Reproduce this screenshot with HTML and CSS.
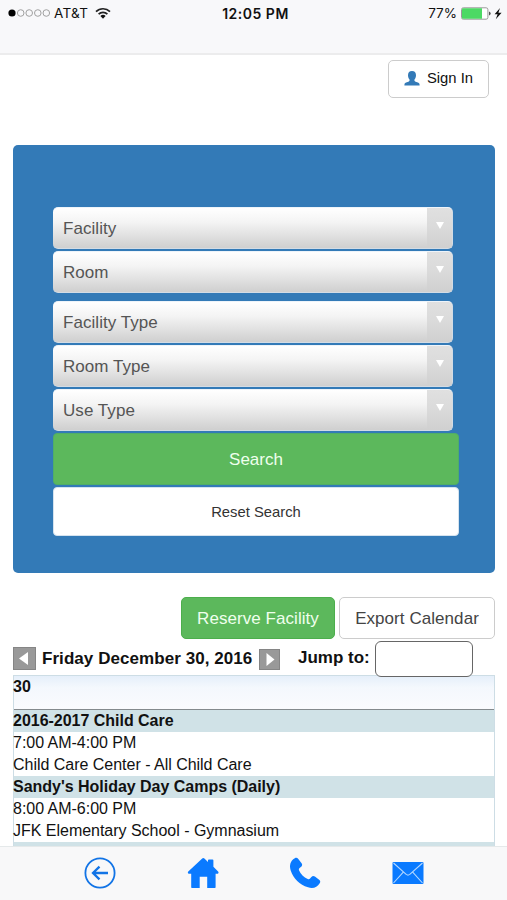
FILE: index.html
```
<!DOCTYPE html>
<html lang="en">
<head>
    <meta charset="UTF-8">
    <title>Facility Calendar</title>
    <link rel="stylesheet" href="styles.css">
</head>
<body>
<div class="app">
    <div class="statusbar">
        <div class="carrier">
            <svg class="signal" width="42" height="8" viewBox="0 0 42 8">
                <circle cx="4" cy="4" r="3.6" fill="#000"/>
                <g fill="none" stroke="#a0a0a0" stroke-width="1">
                    <circle cx="12.7" cy="4" r="3.3"/>
                    <circle cx="21.2" cy="4" r="3.3"/>
                    <circle cx="29.8" cy="4" r="3.3"/>
                    <circle cx="38.3" cy="4" r="3.3"/>
                </g>
            </svg>
            <span class="name">AT&amp;T</span>
            <svg class="wifi" width="16" height="12" viewBox="0 0 16 12">
                <g fill="none" stroke="#222" stroke-width="1.7">
                    <path d="M1 4.6a10 10 0 0 1 14 0"/>
                    <path d="M3.6 7.2a6.3 6.3 0 0 1 8.8 0"/>
                </g>
                <path d="M5.4 9a3.8 3.8 0 0 1 5.2 0L8 11.7z" fill="#111"/>
            </svg>
        </div>
        <div class="clock">12:05 PM</div>
        <div class="power">
            <span>77%</span>
            <svg width="42" height="13" viewBox="0 0 42 13">
                <rect x=".5" y=".8" width="26.4" height="11.4" rx="1.8" fill="#fff" stroke="#999"/>
                <path d="M1 2.5q0-1.2 1.2-1.2H21v10.4H2.2Q1 11.7 1 10.5z" fill="#4cd964"/>
                <path d="M28 4.5q1.7.4 1.7 2t-1.7 2z" fill="#555"/>
                <path d="M39 1l-5.4 6.300h3l-1.800 5 5.800-6.600h-3.200z" fill="#111"/>
            </svg>
        </div>
    </div>

    <div class="content">
        <div class="login">
            <a class="btn btn-signin">
                <svg width="16" height="15" viewBox="0 0 16 15">
                    <path d="M8 0c2.600 0 4 1.600 4 4.200 0 1.800-.7 3.300-1.500 4.300-.3.900 0 1.800 1.100 2.200 2.200.7 4 1 4 3.100v.6H.4v-.6c0-2.100 1.800-2.400 4-3.100 1.100-.4 1.400-1.300 1.100-2.200C4.700 7.500 4 6 4 4.200 4 1.600 5.400 0 8 0z" fill="#337ab7"/>
                </svg>
                <span>Sign In</span>
            </a>
        </div>

        <div class="search-panel">
            <div class="select"><span>Facility</span><i></i></div>
            <div class="select room"><span>Room</span><i></i></div>
            <div class="select"><span>Facility Type</span><i></i></div>
            <div class="select"><span>Room Type</span><i></i></div>
            <div class="select"><span>Use Type</span><i></i></div>
            <div class="submit">Search</div>
            <div class="reset">Reset Search</div>
        </div>

        <div class="actions">
            <a class="btn btn-green">Reserve Facility</a>
            <a class="btn btn-export">Export Calendar</a>
        </div>

        <div class="date-nav">
            <svg class="prev" width="23" height="23" viewBox="0 0 23 23">
                <rect x=".5" y=".5" width="22" height="22" fill="#999" stroke="#858585"/>
                <path d="M15 5v13L6 11.5z" fill="#fff"/>
            </svg>
            <span class="date">Friday December 30, 2016</span>
            <svg class="next" width="21" height="21" viewBox="0 0 21 21">
                <rect x=".5" y=".5" width="20" height="20" fill="#999" stroke="#858585"/>
                <path d="M7.5 4v13l8-6.5z" fill="#fff"/>
            </svg>
            <label class="jump" for="jump">Jump to:</label>
            <input id="jump" class="jump-input" type="text">
        </div>

        <div class="calendar">
            <div class="day">30</div>
            <div class="event-title">2016-2017 Child Care</div>
            <div class="event-line">7:00 AM-4:00 PM</div>
            <div class="event-line">Child Care Center - All Child Care</div>
            <div class="event-title">Sandy's Holiday Day Camps (Daily)</div>
            <div class="event-line">8:00 AM-6:00 PM</div>
            <div class="event-line">JFK Elementary School - Gymnasium</div>
            <div class="event-title"></div>
        </div>
    </div>

    <div class="toolbar">
        <svg width="32" height="32" viewBox="0 0 32 32" fill="none" stroke="#1274e6">
            <circle cx="16" cy="16" r="14.600" stroke-width="1.800"/>
            <path d="M24 16H9M15.500 9.600L9 16l6.500 6.400" stroke-width="2.300"/>
        </svg>
        <svg width="32" height="32" viewBox="0 0 32 32" fill="#0a7aff">
            <path d="M16.300 1q.6 0 1.100.5l3.600 3.400V3.500q0-.9.900-.9h3.600q.9 0 .9.900v6.300l4.700 4.600q1 1.100-.3 2.300h-2.200v13.200q0 1.200-1.200 1.200h-7.200V19.700h-7.500v11.400H5.400q-1.200 0-1.200-1.200V16.700H1.700q-1.500-1-.4-2.300L15.200 1.500q.5-.5 1.100-.5z"/>
        </svg>
        <svg width="32" height="32" viewBox="0 0 32 32" fill="#0a7aff">
            <path d="M5.800 1.300c1.300-.8 2.500-.5 3.500.7l3.300 4.200c.9 1.300.7 2.400-.4 3.500-1.300 1.200-2.900 1.800-2.200 3.600 1.600 4 4.900 7.200 8.700 8.700 1.900.7 2.500-.9 3.700-2.100 1.100-1.100 2.200-1.200 3.500-.3l4.200 3.100c1.300 1 1.500 2.100.6 3.500-2.500 4.200-6.700 5.700-11.700 4.100C10.600 27.600 4.500 21.600 1.700 13.400.1 8.600 1.200 4 5.800 1.300z"/>
        </svg>
        <svg width="32" height="32" viewBox="0 0 32 32">
            <rect x=".5" y="5" width="31" height="22" rx="1" fill="#0a7aff"/>
            <path d="M1.500 6l12.700 11.400q1.800 1.400 3.600 0L30.500 6M1.500 26l9.800-10.800M30.500 26l-9.800-10.800" fill="none" stroke="#b5d8ff" stroke-width="1.100"/>
        </svg>
    </div>
</div>
</body>
</html>
```
FILE: styles.css
```
*{
    box-sizing: border-box;
}
body{
    margin: 0;
    background: #fff;
    font-family: "Liberation Sans", Arial, sans-serif;
    color: #111;
}
.app{
    display: flex;
    flex-direction: column;
    width: 507px;
    height: 900px;
    overflow: hidden;
}
.statusbar{
    flex: none;
    height: 55px;
    padding: 4px 4px 0 8px;
    display: grid;
    grid-template-columns: 1fr auto 1fr;
    align-items: start;
    background: #f8f8fa;
    border-bottom: 2px solid #ececed;
    font: 13.5px/19px Inter, sans-serif;
}
.carrier,.power{
    display: flex;
    align-items: center;
    height: 19px;
}
.carrier .name{
    margin: 0 7px 0 4px;
    letter-spacing: .3px;
}
.signal{
    margin-top: -1px;
}
.wifi{
    margin-top: -2px;
}
.clock{
    font-size: 14px;
    font-weight: 600;
    letter-spacing: .5px;
}
.power{
    justify-content: flex-end;
    gap: 4px;
}
.content{
    flex: 1;
    min-height: 0;
    overflow: hidden;
    padding: 5px 12px 0 13px;
}
.btn{
    display: flex;
    align-items: center;
    justify-content: center;
    border: 1px solid #ccc;
    border-radius: 5px;
    white-space: nowrap;
}
.login{
    display: flex;
    justify-content: flex-end;
    padding-right: 6px;
}
.btn-signin{
    width: 101px;
    height: 38px;
    padding-bottom: 2px;
    gap: 7px;
    font-size: 14.8px;
}
.search-panel{
    height: 428px;
    margin-top: 47px;
    padding: 62px 35px 0 40px;
    background: #337ab7;
    border-radius: 5px;
}
.select{
    display: flex;
    align-items: center;
    justify-content: space-between;
    width: 400px;
    height: 42px;
    margin-bottom: 2px;
    padding-left: 10px;
    border: 1px solid #d3dce5;
    border-top-color: #eef4fa;
    border-left: 0;
    border-radius: 5px;
    background: linear-gradient(#fff, #f4f4f4 35%, #cfcfcf);
    color: #555;
    font-size: 17px;
    overflow: hidden;
}
.select span{
    padding-top: 2px;
    letter-spacing: .05px;
}
.select.room{
    margin-bottom: 8px;
}
.select i{
    display: flex;
    justify-content: center;
    width: 25px;
    height: 40px;
    padding-top: 14px;
    background: linear-gradient(#e0e0e0, #dadada 50%, #d0d0d0);
}
.select i:after{
    content: "";
    height: 0;
    border: 4px solid transparent;
    border-top: 7px solid #fff;
    border-bottom: 0;
}
.submit,.reset{
    display: flex;
    align-items: center;
    justify-content: center;
    width: 406px;
    border-radius: 4px;
}
.submit{
    height: 52px;
    padding-top: 2px;
    background: #5cb85c;
    border: 1px solid #4fae67;
    color: #efffed;
    font-size: 17px;
}
.reset{
    height: 49px;
    margin-top: 2px;
    background: #fff;
    border: 1px solid #d5e3ef;
    color: #333;
    font-size: 14.8px;
}
.actions{
    display: flex;
    justify-content: flex-end;
    gap: 4px;
    margin-top: 24px;
}
.actions .btn{
    height: 42px;
    padding-top: 2px;
    font-size: 17px;
    letter-spacing: .06px;
}
.btn-green{
    width: 154px;
    background: #5cb85c;
    border-color: #4cae4c;
    color: #efffed;
}
.btn-export{
    width: 156px;
    color: #444;
}
.date-nav{
    display: flex;
    align-items: center;
    height: 36px;
    margin-top: 2px;
    font-size: 17px;
    font-weight: bold;
}
.prev{
    margin-top: -1px;
}
.date{
    width: 211px;
    margin: 0 6px;
    letter-spacing: .06px;
    white-space: nowrap;
}
.jump{
    width: 73px;
    margin: -2px 4px 0 18px;
    white-space: nowrap;
}
.jump-input{
    position: relative;
    width: 98px;
    height: 36px;
    padding: 0 8px;
    border: 1px solid #666;
    border-radius: 6px;
    background: #fff;
    font: inherit;
}
.calendar{
    margin-top: -2px;
    border: 1px solid #cddde5;
    font-size: 16px;
    line-height: 22px;
    letter-spacing: -.02px;
    text-indent: -1px;
    white-space: nowrap;
}
.day{
    height: 34px;
    border-bottom: 1px solid #848a8d;
    background: linear-gradient(#e5effa, #f4f8fd 35%, #fafbfe);
    font-weight: bold;
}
.event-title{
    height: 22px;
    background: #d0e2e7;
    font-weight: bold;
}
.event-line{
    height: 22px;
}
.toolbar{
    flex: none;
    display: flex;
    gap: 70.5px;
    height: 54px;
    padding: 10px 0 0 84px;
    background: #f8f8f9;
    border-top: 1px solid #e5e9ea;
}
```
